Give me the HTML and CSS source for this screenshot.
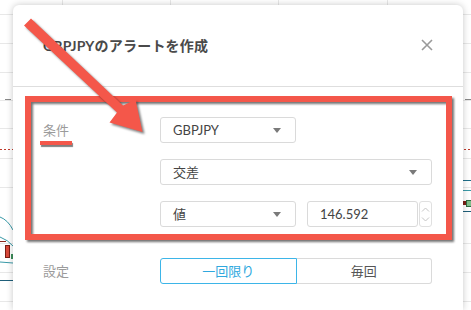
FILE: index.html
```html
<!DOCTYPE html>
<html lang="ja">
<head>
    <meta charset="utf-8">
    <title>アラート作成</title>
    <link rel="stylesheet" href="styles.css">
</head>
<body>

    <!-- chart behind the modal -->
    <svg class="chart" width="471" height="310" viewBox="0 0 471 310">
        <g stroke="#e8e8e8" stroke-width="1">
            <line x1="62.5" y1="0" x2="62.5" y2="310"/>
            <line x1="170.5" y1="0" x2="170.5" y2="310"/>
            <line x1="278.5" y1="0" x2="278.5" y2="310"/>
            <line x1="387.5" y1="0" x2="387.5" y2="310"/>
            <line x1="0" y1="14.5" x2="471" y2="14.5"/>
            <line x1="0" y1="43.5" x2="471" y2="43.5"/>
            <line x1="0" y1="72.5" x2="471" y2="72.5"/>
            <line x1="0" y1="100.5" x2="471" y2="100.5"/>
            <line x1="0" y1="128.5" x2="471" y2="128.5"/>
            <line x1="0" y1="158.5" x2="471" y2="158.5"/>
            <line x1="0" y1="187.5" x2="471" y2="187.5"/>
            <line x1="0" y1="243.5" x2="471" y2="243.5"/>
            <line x1="0" y1="272.5" x2="471" y2="272.5"/>
            <line x1="0" y1="301.5" x2="471" y2="301.5"/>
        </g>
        <line x1="5" y1="99.5" x2="11" y2="99.5" stroke="#888"/>
        <line x1="465" y1="99.5" x2="471" y2="99.5" stroke="#888"/>
        <line x1="0" y1="149.5" x2="471" y2="149.5" stroke="#c0392b" stroke-dasharray="2 2"/>
        <g fill="none" stroke-width="1">
            <path d="M0 217 Q8 220 13 230" stroke="#3a9aa8"/>
            <path d="M0 237 Q8 240 13 246" stroke="#3a9aa8"/>
            <path d="M0 262 L13 263" stroke="#3a9aa8"/>
            <path d="M0 280.5 L13 280.5" stroke="#1f5f7a"/>
            <path d="M463 180.5 L471 180.5" stroke="#1f6f8a"/>
            <path d="M463 190.5 L471 190.5" stroke="#3a9aa8"/>
            <path d="M463 211.5 L471 211.5" stroke="#1f5f7a"/>
            <path d="M0 241.5 L6 241.5" stroke="#8b2a1f"/>
        </g>
        <rect x="5.5" y="245.5" width="4" height="12" fill="#d9493a" stroke="#7a1e14"/>
        <rect x="11" y="254" width="2" height="5" fill="#3e8e5a"/>
        <rect x="466.5" y="200.5" width="5" height="6" fill="#7fbf8a" stroke="#2e6b3f"/>
        <rect x="463" y="201" width="3" height="4" fill="#7a1e14"/>
    </svg>

    <div class="dialog">
        <div class="dialog-head">
            <h1 class="dialog-title">GBPJPYのアラートを作成</h1>
            <span class="close">
                <svg width="12" height="12" viewBox="0 0 12 12">
                    <path d="M1 1L11 11M11 1L1 11" stroke="#9a9a9a" stroke-width="1.6" fill="none"/>
                </svg>
            </span>
        </div>

        <div class="dialog-body">
            <div class="row">
                <div class="label">条件</div>
                <div class="controls">
                    <div class="line">
                        <div class="select half">GBPJPY<span class="caret"></span></div>
                    </div>
                    <div class="select">交差<span class="caret"></span></div>
                    <div class="line">
                        <div class="select half">値<span class="caret"></span></div>
                        <div class="number">
                            <div class="number-value">146.592</div>
                            <div class="spin">
                                <svg width="9" height="5" viewBox="0 0 9 5"><path d="M1 4.5L4.5 1L8 4.5" stroke="#c4c4c4" fill="none"/></svg>
                                <svg width="9" height="5" viewBox="0 0 9 5"><path d="M1 0.5L4.5 4L8 0.5" stroke="#c4c4c4" fill="none"/></svg>
                            </div>
                        </div>
                    </div>
                </div>
            </div>

            <div class="row">
                <div class="label">設定</div>
                <div class="controls">
                    <div class="segmented">
                        <div class="seg active">一回限り</div>
                        <div class="seg">毎回</div>
                    </div>
                </div>
            </div>
        </div>
    </div>

    <!-- annotations -->
    <div class="callout"></div>
    <div class="underline"></div>
    <svg class="arrow" width="471" height="310" viewBox="0 0 471 310">
        <polygon points="31,18.5 123,105.5 135.5,99.5 142.5,132 109.5,122.5 117,112.5 24,25.5" fill="#f4574a"/>
    </svg>

</body>
</html>
```

FILE: styles.css
```css
* {
    box-sizing: border-box;
}
body {
    margin: 0;
    width: 471px;
    height: 310px;
    overflow: hidden;
    position: relative;
    background: #fff;
    font-family: "Lato", "Noto Sans CJK JP", sans-serif;
    padding: 5px 0 0 13px;
}
.chart {
    position: absolute;
    left: 0;
    top: 0;
}
.dialog {
    position: relative;
    width: 450px;
    height: 305px;
    background: #fff;
    border-radius: 6px 6px 0 0;
    box-shadow: 0 0 7px rgba(0, 0, 0, 0.22);
}
.dialog-head {
    height: 82px;
    border-bottom: 1px solid #dedede;
    display: flex;
    align-items: center;
    justify-content: space-between;
    padding: 0 30px 2px 30px;
}
.dialog-title {
    margin: 0;
    font-size: 14px;
    font-weight: 700;
    color: #4a4a4a;
    letter-spacing: 0.2px;
}
.close {
    display: flex;
    width: 12px;
    height: 12px;
}
.dialog-body {
    padding: 30px 31px 0 30px;
    display: flex;
    flex-direction: column;
    gap: 31px;
}
.row {
    display: flex;
}
.label {
    width: 117px;
    height: 26px;
    line-height: 26px;
    font-size: 13px;
    color: #9b9b9b;
}
.controls {
    flex: 1;
    display: flex;
    flex-direction: column;
    gap: 16px;
}
.line {
    display: flex;
    gap: 11px;
}
.select {
    position: relative;
    height: 26px;
    line-height: 24px;
    border: 1px solid #dadada;
    border-radius: 3px;
    padding-left: 12px;
    font-size: 13px;
    color: #444;
}
.select.half {
    width: 136px;
}
.caret {
    position: absolute;
    right: 14px;
    top: 10px;
    border-left: 4px solid transparent;
    border-right: 4px solid transparent;
    border-top: 5px solid #7a7a7a;
}
.number {
    flex: 1;
    display: flex;
    gap: 1px;
}
.number-value {
    flex: 1;
    height: 26px;
    line-height: 24px;
    border: 1px solid #dadada;
    border-radius: 3px;
    padding-left: 12px;
    font-size: 13px;
    color: #444;
}
.spin {
    width: 13px;
    height: 26px;
    border: 1px solid #e0e0e0;
    border-radius: 3px;
    display: flex;
    flex-direction: column;
    align-items: center;
    justify-content: space-around;
    padding: 2px 0;
}
.segmented {
    display: flex;
    height: 26px;
}
.seg {
    flex: 1;
    line-height: 24px;
    text-align: center;
    font-size: 13px;
    color: #555;
    border: 1px solid #dadada;
    border-left: none;
    border-radius: 0 3px 3px 0;
}
.seg.active {
    color: #2fa8de;
    border: 1px solid #3db5e8;
    border-radius: 3px 0 0 3px;
}
.callout {
    position: absolute;
    left: 25px;
    top: 96px;
    width: 427px;
    height: 144px;
    border: 6px solid #f4574a;
    filter: drop-shadow(2px 2px 1px rgba(0, 0, 0, 0.55));
}
.underline {
    position: absolute;
    left: 40px;
    top: 141px;
    width: 32px;
    height: 4px;
    background: #f4574a;
    box-shadow: 1px 2px 1px rgba(0, 0, 0, 0.5);
}
.arrow {
    position: absolute;
    left: 0;
    top: 0;
    filter: drop-shadow(2px 2px 1px rgba(0, 0, 0, 0.5));
}
```
